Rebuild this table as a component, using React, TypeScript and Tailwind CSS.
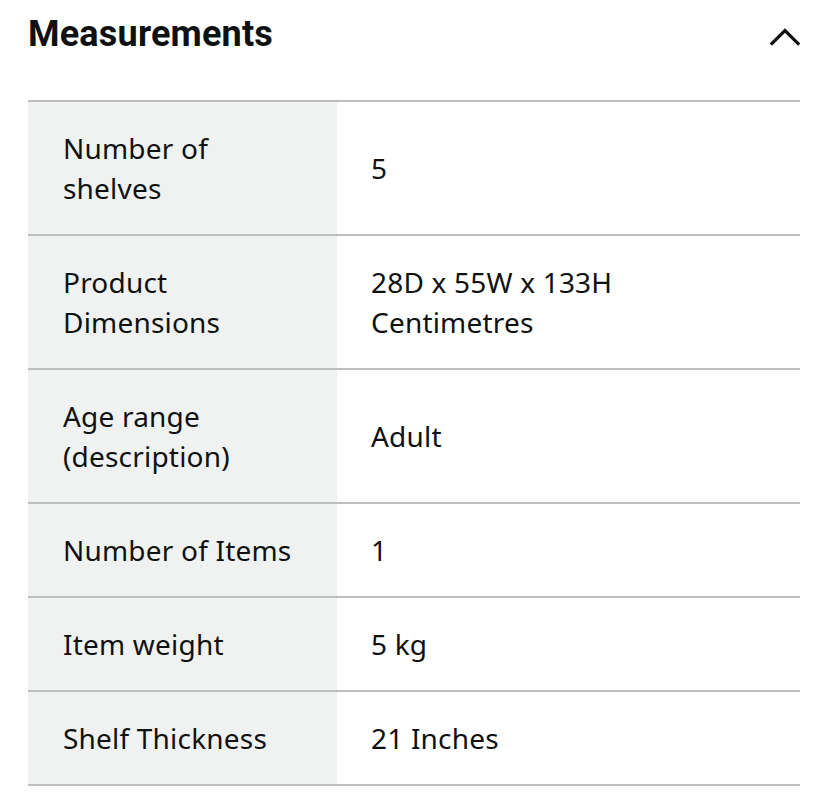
const rows: [string, string][] = [
  ['Number of shelves', '5'],
  ['Product Dimensions', '28D x 55W x 133H Centimetres'],
  ['Age range (description)', 'Adult'],
  ['Number of Items', '1'],
  ['Item weight', '5 kg'],
  ['Shelf Thickness', '21 Inches'],
];

export default function App() {
  return (
    <div className="min-h-[798px] w-[828px] bg-white px-[28px] text-[#0f1111] [font-family:'Noto_Sans',sans-serif]">
      <div className="flex h-[100px] items-start justify-between pt-[9px]">
        <h2 className="text-[36px] font-bold leading-[50px] tracking-[0.2px] [font-family:'Roboto',sans-serif]">
          Measurements
        </h2>
        {/* collapse chevron */}
        <svg width="32" height="20" viewBox="0 0 32 20" className="mt-[18px] -mr-[1px]" fill="none">
          <polyline
            points="3,16.5 16,3.5 29,16.5"
            stroke="#0f1111"
            strokeWidth="3.2"
            strokeLinecap="square"
          />
        </svg>
      </div>

      <div className="border-t-2 border-[#bbbfbf]">
        {rows.map(([label, value]) => (
          <div key={label} className="grid grid-cols-[309px_1fr] border-b-2 border-[#bbbfbf]">
            <div className="bg-[#f0f2f2] py-[26px] pl-[35px] pr-[40px] text-[28px] leading-[40px] tracking-[0.2px]">
              {label}
            </div>
            <div className="flex items-center py-[26px] pl-[34px] pr-[60px] text-[28px] leading-[40px] tracking-[0.2px]">
              {value}
            </div>
          </div>
        ))}
      </div>
    </div>
  );
}
